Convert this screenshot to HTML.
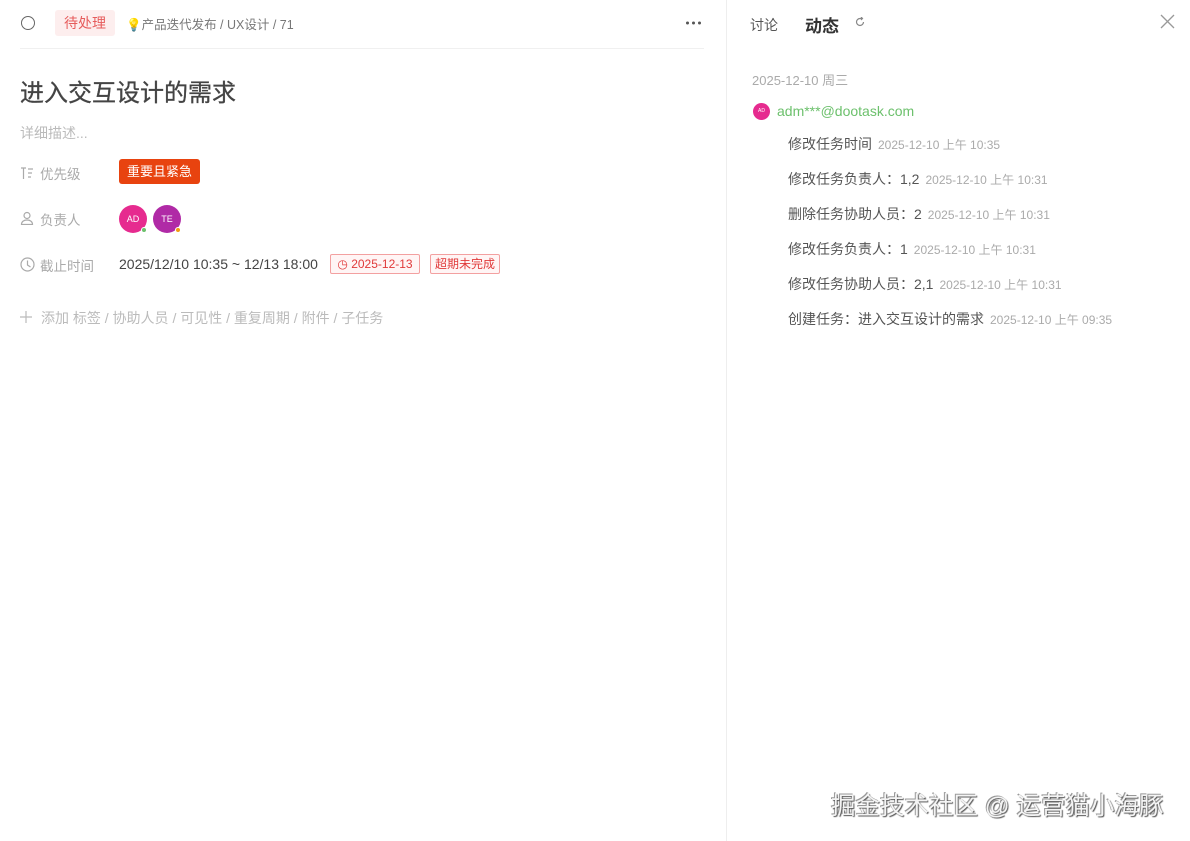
<!DOCTYPE html>
<html><head><meta charset="utf-8"><style>
*{margin:0;padding:0;box-sizing:border-box}
body{width:1190px;height:841px;background:#fff;font-family:"Liberation Sans","Noto Sans CJK SC",sans-serif;position:relative;overflow:hidden;color:#333}
.a{position:absolute;white-space:nowrap}
.row{font-size:14px;color:#555}
.ts{font-size:12px;color:#aaa;margin-left:6px}
.lbl{font-size:13.5px;color:#aaa}
</style></head><body>
<div class="a" style="left:726px;top:0;width:1px;height:841px;background:#eee"></div>
<div class="a" style="left:20px;top:48px;width:684px;height:1px;background:#f0f0f0"></div>
<div class="a" style="left:21px;top:16px;width:14px;height:14px;border:1.5px solid #666;border-radius:50%"></div>
<div class="a" style="left:55px;top:10px;width:60px;height:26px;background:#fdeeee;color:#e65c5c;font-size:14px;line-height:26px;text-align:center;border-radius:3px">待处理</div>
<div class="a" style="left:126px;top:14px;font-size:12.5px;color:#777">💡产品迭代发布 / UX设计 / 71</div>
<svg class="a" style="left:685px;top:20px" width="18" height="6"><circle cx="2.5" cy="3" r="1.5" fill="#555"/><circle cx="8.5" cy="3" r="1.5" fill="#555"/><circle cx="14.5" cy="3" r="1.5" fill="#555"/></svg>
<div class="a" style="left:20px;top:73px;font-size:24px;color:#444;-webkit-text-stroke:0.3px #444">进入交互设计的需求</div>
<div class="a" style="left:20px;top:123px;font-size:14px;color:#bbb">详细描述...</div>
<svg class="a" style="left:20px;top:166px" width="14" height="14" fill="none" stroke="#aaa" stroke-width="1.2"><path d="M1 2h5M3.5 2v11M8 3h5M8 7h4M8 11h3"/></svg>
<div class="a lbl" style="left:40px;top:163px">优先级</div>
<div class="a" style="left:119px;top:159px;width:81px;height:25px;background:#e8430f;color:#fff;font-size:13px;line-height:25px;text-align:center;border-radius:3px">重要且紧急</div>
<svg class="a" style="left:20px;top:211px" width="14" height="14" fill="none" stroke="#aaa" stroke-width="1.2"><circle cx="7" cy="4.5" r="3"/><path d="M1.5 13.5c0-3 2.5-4.5 5.5-4.5s5.5 1.5 5.5 4.5z"/></svg>
<div class="a lbl" style="left:40px;top:209px">负责人</div>
<div class="a" style="left:119px;top:205px;width:28px;height:28px;border-radius:50%;background:#e62b8f;color:#fff;font-size:9px;line-height:28px;text-align:center">AD</div>
<div class="a" style="left:141px;top:227px;width:6px;height:6px;border-radius:50%;background:#6cc06c;border:1px solid #fff"></div>
<div class="a" style="left:153px;top:205px;width:28px;height:28px;border-radius:50%;background:#b02aa6;color:#fff;font-size:9px;line-height:28px;text-align:center">TE</div>
<div class="a" style="left:175px;top:227px;width:6px;height:6px;border-radius:50%;background:#f39c12;border:1px solid #fff"></div>
<svg class="a" style="left:20px;top:257px" width="15" height="15" fill="none" stroke="#aaa" stroke-width="1.2"><circle cx="7.5" cy="7.5" r="6.5"/><path d="M7.5 3.5v4.5l3 2"/></svg>
<div class="a lbl" style="left:40px;top:255px">截止时间</div>
<div class="a" style="left:119px;top:256px;font-size:14px;color:#444">2025/12/10 10:35 ~ 12/13 18:00</div>
<div class="a" style="left:330px;top:254px;width:90px;height:20px;border:1px solid #f3a0a0;background:#fff5f5;color:#e03a3a;font-size:12px;line-height:18px;text-align:center;border-radius:2px">◷ 2025-12-13</div>
<div class="a" style="left:430px;top:254px;width:70px;height:20px;border:1px solid #f3a0a0;background:#fff5f5;color:#e03a3a;font-size:12px;line-height:18px;text-align:center;border-radius:2px">超期未完成</div>
<svg class="a" style="left:20px;top:311px" width="12" height="12" stroke="#bbb" stroke-width="1.2"><path d="M6 0v12M0 6h12"/></svg>
<div class="a" style="left:41px;top:308px;font-size:14px;color:#bbb">添加 标签 / 协助人员 / 可见性 / 重复周期 / 附件 / 子任务</div>
<div class="a" style="left:750px;top:15px;font-size:14px;color:#555">讨论</div>
<div class="a" style="left:805px;top:12px;font-size:17px;color:#333;font-weight:bold">动态</div>
<svg class="a" style="left:855px;top:17px" width="10" height="10" fill="none" stroke="#888" stroke-width="1.2"><path d="M8.5 5A3.5 3.5 0 1 1 5 1.5h2M6 0l1.5 1.5L6 3"/></svg>
<svg class="a" style="left:1160px;top:14px" width="15" height="15" stroke="#999" stroke-width="1.3"><path d="M1 1l13 13M14 1L1 14"/></svg>
<div class="a" style="left:752px;top:70px;font-size:13px;color:#aaa">2025-12-10 周三</div>
<div class="a" style="left:753px;top:103px;width:17px;height:17px;border-radius:50%;background:#e62b8f;color:#fff;font-size:5px;line-height:17px;text-align:center">AD</div>
<div class="a" style="left:777px;top:103px;font-size:14px;color:#6cc06c">adm***@dootask.com</div>
<div class="a row" style="left:788px;top:134px">修改任务时间<span class="ts">2025-12-10 上午 10:35</span></div>
<div class="a row" style="left:788px;top:169px">修改任务负责人：1,2<span class="ts">2025-12-10 上午 10:31</span></div>
<div class="a row" style="left:788px;top:204px">删除任务协助人员：2<span class="ts">2025-12-10 上午 10:31</span></div>
<div class="a row" style="left:788px;top:239px">修改任务负责人：1<span class="ts">2025-12-10 上午 10:31</span></div>
<div class="a row" style="left:788px;top:274px">修改任务协助人员：2,1<span class="ts">2025-12-10 上午 10:31</span></div>
<div class="a row" style="left:788px;top:309px">创建任务：进入交互设计的需求<span class="ts">2025-12-10 上午 09:35</span></div>
<div class="a" style="left:831px;top:787px;font-size:24.5px;color:#f4f4f4;text-shadow:1px 1px 1px #555,-1px -1px 0 #999">掘金技术社区 @ 运营猫小海豚</div>
</body></html>
